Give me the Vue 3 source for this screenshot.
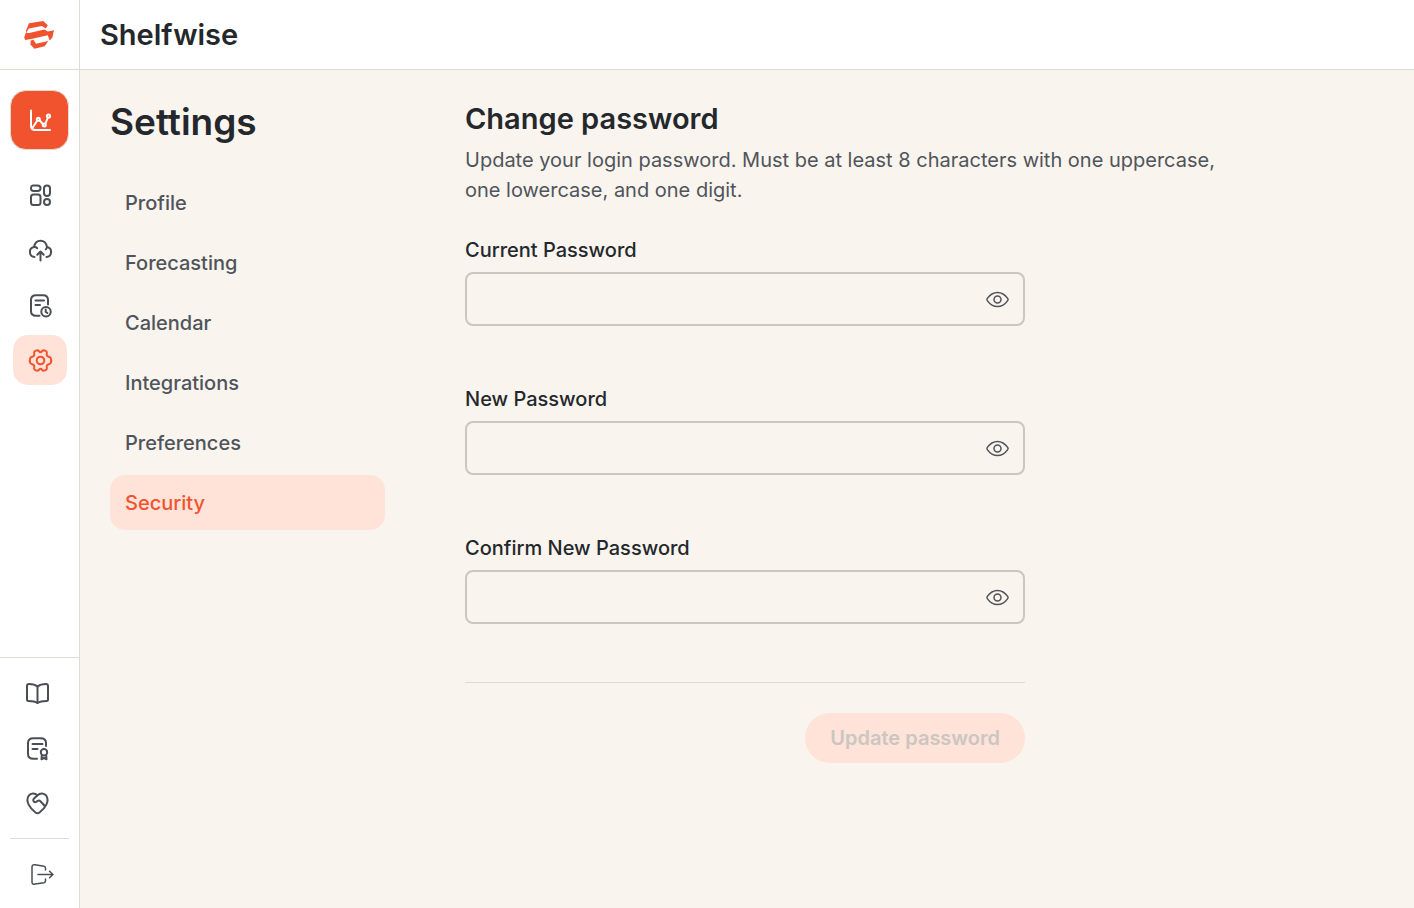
<template>
  <div class="app">
    <header class="topbar">
      <a class="logo" href="#" aria-label="Shelfwise home">
        <svg width="32" height="30" viewBox="0 0 32 30" fill="#f1532f">
          <path d="M5 3.300 19.200 .9 23.800 5.200 21.800 8.600 17.800 5.900 4.800 8.600 2.600 12.200 1.800 11Z" />
          <path d="M2 12.200 4.200 13.200 20.400 9.600 23.800 11.400 30 10.200 28.400 17.400 25.600 20.400 23.800 15.200 8.400 18.800 1.200 20 .2 17.600Z" />
          <path d="M6.800 20.400 9.400 19.800 12 23.800 24.200 21 20.800 26.200 10.400 28.800 6.400 24.600Z" />
        </svg>
      </a>
      <div class="brand">Shelfwise</div>
    </header>

    <div class="body">
      <aside class="sidebar">
        <nav class="side-main" aria-label="Main">
          <a class="side-primary" href="#" aria-label="Forecast">
            <svg class="icon" viewBox="0 0 24 24">
              <path d="M3 2.500v15q0 4.500 4.500 4.500H22" />
              <path d="M4 20.500 9 13M11.800 12.500l3 3.500M17.500 15.500l2.200-5.500" />
              <circle cx="10.300" cy="11.200" r="1.500" />
              <circle cx="16.300" cy="17" r="1.500" />
              <circle cx="20.500" cy="8" r="1.600" />
            </svg>
          </a>
          <a
            v-for="item in mainItems"
            :key="item.label"
            class="side-link"
            :class="{ active: item.active }"
            href="#"
            :aria-label="item.label"
          >
            <svg class="icon" viewBox="0 0 24 24">
              <path v-for="d in item.paths" :key="d" :d="d" />
            </svg>
          </a>
        </nav>

        <nav class="side-bottom" aria-label="Support">
          <a v-for="item in bottomItems" :key="item.label" class="side-link" href="#" :aria-label="item.label">
            <svg class="icon" viewBox="0 0 24 24">
              <path v-for="d in item.paths" :key="d" :d="d" />
            </svg>
          </a>
          <hr class="side-divider" />
          <button class="side-link" type="button" aria-label="Log out">
            <svg class="icon thin" viewBox="0 0 28 24">
              <path d="M19.500 8V6Q19.500 4.700 18 4.300L9 2.800Q6 2.300 6 5v15Q6 22.500 9 22.100l9-1.400q1.500-.4 1.500-1.700V17" />
              <path d="M12 12.500h15M23.500 9.200 27 12.500l-3.500 3.300" />
            </svg>
          </button>
        </nav>
      </aside>

      <main class="content">
        <section class="settings">
          <h1 class="page-title">Settings</h1>
          <nav class="settings-nav" aria-label="Settings">
            <a
              v-for="tab in tabs"
              :key="tab"
              class="tab"
              :class="{ active: tab === currentTab }"
              href="#"
              @click.prevent="currentTab = tab"
            >{{ tab }}</a>
          </nav>
        </section>

        <section class="panel">
          <h2 class="panel-title">Change password</h2>
          <p class="panel-text">
            Update your login password. Must be at least 8 characters with one uppercase, one lowercase, and one digit.
          </p>

          <form class="form" @submit.prevent>
            <div v-for="field in fields" :key="field.id" class="field">
              <label :for="field.id">{{ field.label }}</label>
              <div class="input-box">
                <input :id="field.id" v-model="field.value" :type="field.visible ? 'text' : 'password'" />
                <button type="button" class="eye" aria-label="Show password" @click="field.visible = !field.visible">
                  <svg class="icon thin" viewBox="0 0 24 24">
                    <path d="M1.300 11.400C4 7.600 7.400 5.400 11.500 5.400s7.500 2.200 10.200 6q.8 1.100 0 2.200C19 17.400 15.600 19.600 11.500 19.600S4 17.400 1.300 13.600q-.8-1.100 0-2.200Z" />
                    <circle cx="11.500" cy="12.500" r="3.500" />
                  </svg>
                </button>
              </div>
            </div>
            <div class="actions">
              <button class="submit" type="submit" :disabled="!canSubmit">Update password</button>
            </div>
          </form>
        </section>
      </main>
    </div>
  </div>
</template>

<script setup>
import { computed, reactive, ref } from 'vue';

const tabs = ['Profile', 'Forecasting', 'Calendar', 'Integrations', 'Preferences', 'Security'];
const currentTab = ref('Security');

const fields = reactive([
  { id: 'current-password', label: 'Current Password', value: '', visible: false },
  { id: 'new-password', label: 'New Password', value: '', visible: false },
  { id: 'confirm-password', label: 'Confirm New Password', value: '', visible: false }
]);

// The button stays disabled until all three fields are filled in
const canSubmit = computed(() => fields.every(field => field.value !== ''));

const mainItems = [
  {
    label: 'Dashboard',
    paths: [
      'M5.500 2.500h4Q12.500 2.500 12.500 5.200T9.500 8h-4Q3 8 3 5.200T5.500 2.500Z',
      'M5.500 11.500h4.500q2.500 0 2.500 2.500v5.500q0 2.500-2.500 2.500H5.500q-2.500 0-2.500-2.500v-5.500q0-2.500 2.500-2.500Z',
      'M19 2.500Q22 2.500 22 5.500v4.500q0 3-3 3t-3-3v-4.500Q16 2.500 19 2.500Z',
      'M19 16a3 3 0 1 1 0 6a3 3 0 1 1 0-6Z'
    ]
  },
  {
    label: 'Upload',
    paths: [
      'M6.500 19A5 5 0 0 1 6 9.100C6.700 5.200 9.200 2.800 12.500 2.800s5.800 2.400 6.500 6.300A5 5 0 0 1 18.500 19',
      'M6 9.100Q8 8.900 9.200 10.200M19 9.100q-.3 1.400-1.200 2.300',
      'M12.500 22.500V14M9.300 16.700 12.500 13.500l3.200 3.200'
    ]
  },
  {
    label: 'History',
    paths: [
      'M11.500 22.800H8Q3 22.800 3 18V7Q3 2.200 8 2.200h7Q20 2.200 20 7v4.500',
      'M7.500 7.500h8.500M7.500 12h4.500',
      'M18 14a4.700 4.700 0 1 1 0 9.400a4.700 4.700 0 1 1 0-9.400Z',
      'M17.700 16.500v2.500l1.600 .9'
    ]
  },
  {
    label: 'Settings',
    active: true,
    paths: [
      'M12.500 4.200C13.800 4.200 14.200 2.200 15.600 2.200C16.600 2.300 17.800 2.900 18.500 3.500C19.500 4.500 18.200 6.200 18.900 7.600C19.700 9 21.800 8.600 22.800 10Q23.700 12.500 22.800 15C21.800 16.400 19.700 16 18.900 17.400C18.200 18.800 19.500 20.500 18.500 21.500C17.800 22.100 16.600 22.700 15.600 22.800C14.200 22.800 13.800 20.800 12.500 20.800S10.800 22.800 9.400 22.800C8.400 22.700 7.200 22.100 6.500 21.500C5.500 20.500 6.800 18.800 6.100 17.400C5.300 16 3.200 16.400 2.200 15Q1.300 12.500 2.200 10C3.200 8.600 5.300 9 6.100 7.600C6.800 6.200 5.500 4.500 6.500 3.500C7.200 2.900 8.400 2.300 9.400 2.200C10.800 2.200 11.200 4.200 12.500 4.200Z',
      'M12.500 8.700a3.800 3.800 0 1 1 0 7.600a3.800 3.800 0 1 1 0-7.600Z'
    ]
  }
];

const bottomItems = [
  {
    label: 'Guide',
    paths: [
      'M11.500 22Q8.500 20 2.500 20Q1 20 1 18.500V5Q1 3 3 3Q8.500 3 11.500 5.500Q14.500 3 20 3Q22 3 22 5V18.500Q22 20 20.500 20Q14.500 20 11.500 22Z',
      'M11.500 5.500v16.500'
    ]
  },
  {
    label: 'License',
    paths: [
      'M11 22.800H7.500Q2 22.800 2 18V7Q2 2.200 7.500 2.200h7Q20 2.200 20 7v3',
      'M6.500 8h10M6.500 13h5',
      'M18 13a3.200 3.200 0 1 1 0 6.400a3.200 3.200 0 1 1 0-6.400Z',
      'M15.800 19l-.3 4.300 2.500-1.300 2.500 1.300-.3-4.300'
    ]
  },
  {
    label: 'Support',
    paths: [
      'M11.500 4.300C8.700 1.800 5 2 2.700 4.700C-.8 10 3.500 17 9.500 21.500Q11.500 23 13.500 21.500C19.500 17 23.800 10 20.300 4.700C18 2 14.300 1.800 11.500 4.300Z',
      'M11.500 4.300 7.800 7.700C6.200 9.500 8.200 12 10.200 10.900L12.200 9.700Q13.400 9.200 14.400 10.200L18.800 15'
    ]
  }
];
</script>

<style>
body {
  margin: 0;
}
</style>

<style scoped>
.app {
  display: flex;
  flex-direction: column;
  min-height: 100vh;
  box-sizing: border-box;
  background: #f9f4ee;
  color: #24282c;
  font-family: Inter, sans-serif;
  font-size: 20px;
  line-height: 30px;
}

.app *,
.app *::before {
  box-sizing: border-box;
}

.topbar {
  display: flex;
  height: 70px;
  background: #fff;
  border-bottom: 1px solid #dedcd6;
}

.logo {
  display: flex;
  align-items: center;
  justify-content: center;
  width: 80px;
  border-right: 1px solid #dedcd6;
}

.brand {
  display: flex;
  align-items: center;
  padding-left: 20px;
  font-size: 29px;
  font-weight: 600;
}

.body {
  display: flex;
  flex: 1;
}

/* Sidebar */
.sidebar {
  display: flex;
  flex-direction: column;
  justify-content: space-between;
  flex: none;
  width: 80px;
  background: #fff;
  border-right: 1px solid #dedcd6;
}

.side-main,
.side-bottom {
  display: flex;
  flex-direction: column;
  align-items: center;
  gap: 5px;
}

.side-main {
  padding-top: 20px;
}

.side-primary {
  display: flex;
  align-items: center;
  justify-content: center;
  width: 59px;
  height: 60px;
  margin-bottom: 15px;
  color: #fff;
  background: #f1532f;
  border: 1px solid #dedcd6;
  border-radius: 16px;
}

.side-link {
  display: flex;
  align-items: center;
  justify-content: center;
  width: 54px;
  height: 50px;
  padding: 0;
  color: #4b4f55;
  background: none;
  border: 0;
  border-radius: 15px;
  cursor: pointer;
}

.side-link.active {
  color: #f1532f;
  background: #ffe2d8;
}

.side-bottom {
  padding: 10px 0 9px;
  border-top: 1px solid #dedcd6;
}

.side-bottom a {
  padding-right: 4px;
}

.side-divider {
  width: 59px;
  margin: 5px 0;
  border: 0;
  border-top: 1px solid #dedcd6;
}

.icon {
  display: block;
  height: 24px;
  overflow: visible;
  fill: none;
  stroke: currentColor;
  stroke-width: 2;
  stroke-linecap: round;
  stroke-linejoin: round;
}

.icon.thin {
  stroke-width: 1.5;
}

/* Content */
.content {
  display: flex;
  flex: 1;
  align-items: flex-start;
  gap: 80px;
  padding: 30px;
}

.settings {
  flex: none;
  width: 275px;
}

.page-title {
  margin: 0 0 32px;
  font-size: 37px;
  font-weight: 600;
  line-height: 43px;
}

.settings-nav {
  display: flex;
  flex-direction: column;
  gap: 5px;
}

.tab {
  padding: 13px 15px 12px;
  color: #50545a;
  font-weight: 500;
  text-decoration: none;
  border-radius: 15px;
}

.tab.active {
  color: #f1532f;
  background: #ffe2d8;
}

.panel {
  flex: 1;
  max-width: 760px;
}

.panel-title {
  margin: 0 0 7px;
  font-size: 29px;
  font-weight: 600;
  line-height: 38px;
}

.panel-text {
  margin: 0 0 30px;
  color: #50545a;
}

.form {
  max-width: 560px;
}

.field {
  display: flex;
  flex-direction: column;
  gap: 7px;
  margin-bottom: 58px;
}

.field label {
  font-weight: 500;
}

.input-box {
  display: flex;
  height: 54px;
  border: 2px solid #cbc6c0;
  border-radius: 8px;
}

.input-box:focus-within {
  border-color: #f1532f;
}

.input-box input {
  flex: 1;
  min-width: 0;
  padding: 0 13px;
  color: inherit;
  font: inherit;
  background: none;
  border: 0;
  outline: 0;
}

.eye {
  display: flex;
  align-items: center;
  padding: 0 13px;
  color: #50545a;
  background: none;
  border: 0;
  cursor: pointer;
}

.actions {
  display: flex;
  justify-content: flex-end;
  padding-top: 30px;
  border-top: 1px solid #dedad5;
}

.submit {
  height: 50px;
  padding: 0 25px;
  color: #fff;
  font: inherit;
  font-weight: 600;
  background: #f1532f;
  border: 0;
  border-radius: 25px;
  cursor: pointer;
}

.submit:disabled {
  color: #cbc6c0;
  background: #ffe2d8;
  cursor: default;
}
</style>
